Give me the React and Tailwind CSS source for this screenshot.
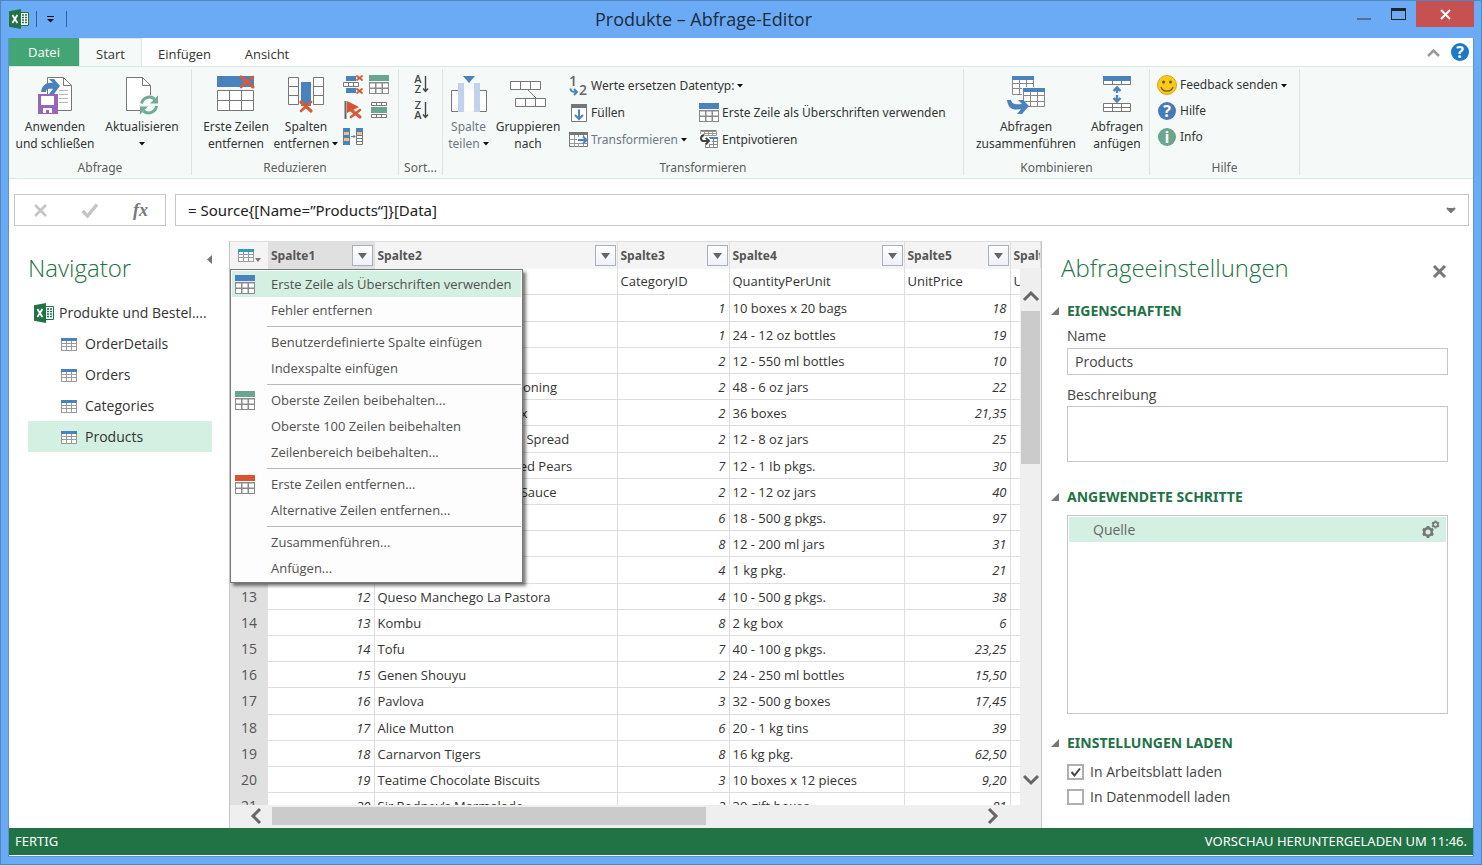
import { useState } from "react";

const products = [
  ["ProductID", "ProductName", "CategoryID", "QuantityPerUnit", "UnitPrice", "UnitsInStock"],
  ["1", "Chai", "1", "10 boxes x 20 bags", "18", "39"],
  ["2", "Chang", "1", "24 - 12 oz bottles", "19", "17"],
  ["3", "Aniseed Syrup", "2", "12 - 550 ml bottles", "10", "13"],
  ["4", "Chef Anton’s Cajun Seasoning", "2", "48 - 6 oz jars", "22", "53"],
  ["5", "Chef Anton’s Gumbo Mix", "2", "36 boxes", "21,35", "0"],
  ["6", "Grandma’s Boysenberry Spread", "2", "12 - 8 oz jars", "25", "12"],
  ["7", "Uncle Bob’s Organic Dried Pears", "7", "12 - 1 Ib pkgs.", "30", "15"],
  ["8", "Northwoods Cranberry Sauce", "2", "12 - 12 oz jars", "40", "6"],
  ["9", "Mishi Kobe Niku", "6", "18 - 500 g pkgs.", "97", "29"],
  ["10", "Ikura", "8", "12 - 200 ml jars", "31", "31"],
  ["11", "Queso Cabrales", "4", "1 kg pkg.", "21", "22"],
  ["12", "Queso Manchego La Pastora", "4", "10 - 500 g pkgs.", "38", "86"],
  ["13", "Kombu", "8", "2 kg box", "6", "24"],
  ["14", "Tofu", "7", "40 - 100 g pkgs.", "23,25", "35"],
  ["15", "Genen Shouyu", "2", "24 - 250 ml bottles", "15,50", "39"],
  ["16", "Pavlova", "3", "32 - 500 g boxes", "17,45", "29"],
  ["17", "Alice Mutton", "6", "20 - 1 kg tins", "39", "0"],
  ["18", "Carnarvon Tigers", "8", "16 kg pkg.", "62,50", "42"],
  ["19", "Teatime Chocolate Biscuits", "3", "10 boxes x 12 pieces", "9,20", "25"],
  ["20", "Sir Rodney’s Marmalade", "3", "30 gift boxes", "81", "40"],
];

const columns = ["Spalte1", "Spalte2", "Spalte3", "Spalte4", "Spalte5", "Spalte6"];
const numericColumns = [0, 2, 4, 5];

const queries = ["OrderDetails", "Orders", "Categories", "Products"];

const menuGroups = [
  [
    { label: "Erste Zeile als Überschriften verwenden", color: "#4a82bd" },
    { label: "Fehler entfernen" },
  ],
  [{ label: "Benutzerdefinierte Spalte einfügen" }, { label: "Indexspalte einfügen" }],
  [
    { label: "Oberste Zeilen beibehalten...", color: "#69a58f" },
    { label: "Oberste 100 Zeilen beibehalten" },
    { label: "Zeilenbereich beibehalten..." },
  ],
  [
    { label: "Erste Zeilen entfernen...", color: "#d9532f" },
    { label: "Alternative Zeilen entfernen..." },
  ],
  [{ label: "Zusammenführen..." }, { label: "Anfügen..." }],
];

// ---------- Icons ----------

const Svg = ({ w, h, children, className = "" }) => (
  <svg width={w} height={h} viewBox={`0 0 ${w} ${h}`} fill="none" className={`shrink-0 overflow-visible ${className}`} aria-hidden="true">
    {children}
  </svg>
);

// Red brush-like cross used by all "remove" icons
const Cross = ({ x, y, w, h }) => (
  <g stroke="#d65b3a" strokeLinecap="round">
    <path d={`M${x} ${y}L${x + w} ${y + h}`} strokeWidth={w > 8 ? 3.2 : 2} />
    <path d={`M${x + w} ${y}L${x} ${y + h}`} strokeWidth={w > 8 ? 2.6 : 1.8} />
  </g>
);

const ExcelIcon = () => (
  <Svg w={20} h={20}>
    <path d="M10 3.5h9.5v13H10z" fill="#fff" stroke="#217346" />
    <path d="M13 6h5M13 8.5h5M13 11h5M13 13.5h5" stroke="#217346" strokeWidth="1.6" strokeDasharray="2 1" />
    <path d="M0 2.2L12 0v20L0 17.8z" fill="#217346" />
    <path d="M3.4 6l5 8M8.4 6l-5 8" stroke="#fff" strokeWidth="1.8" />
  </Svg>
);

const GridIcon = ({ color }) => (
  <Svg w={20} h={19}>
    <path d="M0 0h20v6H0z" fill={color} />
    <path d="M0 7h20v12H0z" fill="#8a8a8a" />
    <path d="M1 8.5h5v4H1zM7.5 8.5h5v4h-5zM14 8.5h5v4h-5zM1 14h5v4H1zM7.5 14h5v4h-5zM14 14h5v4h-5z" fill="#fff" />
  </Svg>
);

const TableIcon = ({ color = "#4a82bd" }) => (
  <Svg w={16} h={13}>
    <path d="M0 0h16v13H0z" fill="#9a9a9a" />
    <path d="M0 0h16v3H0z" fill={color} />
    <path d="M1 3h4v2H1zM6 3h4v2H6zM11 3h4v2h-4zM1 6h4v2H1zM6 6h4v2H6zM11 6h4v2h-4zM1 9h4v3H1zM6 9h4v3H6zM11 9h4v3h-4z" fill="#fff" />
  </Svg>
);

const ApplyIcon = () => (
  <Svg w={36} h={38}>
    <path d="M10.5 1.5h16l8 8v25h-24z" fill="#fff" stroke="#777" />
    <path d="M26.5 1.5v8h8" stroke="#777" />
    <path d="M22 14.5h9M22 18.5h9M22 22.5h9M22 26.5h9" stroke="#b5b5b5" />
    <path d="M4 16C5 9 10 6 16 7l-4-4h5l6 7-6 8h-5l4-5c-5-1-7 0-7 3z" fill="#4a82bd" />
    <path d="M1 18h20v20H1z" fill="#9866b8" />
    <path d="M4 20h13v9H4zM6 32h9v5h-3v-3H9v3H6z" fill="#fff" />
  </Svg>
);

const RefreshIcon = () => (
  <Svg w={34} h={38}>
    <path d="M1.5 1.5h16l8 8v25h-24z" fill="#fff" stroke="#777" />
    <path d="M17.5 1.5v8h8" stroke="#777" />
    <circle cx="24" cy="29" r="10" fill="#f5faf8" />
    <path d="M16.5 27.5a8 8 0 0 1 13-4.5M31.5 30a8 8 0 0 1-13 5" stroke="#72aa97" strokeWidth="3" />
    <path d="M33 19.5v8h-8zM15 38.5v-8h8z" fill="#72aa97" />
  </Svg>
);

const RemoveRowsIcon = () => (
  <Svg w={38} h={38}>
    <path d="M0 0h37v11H0z" fill="#4a82bd" />
    <path d="M.5 14.5h36v20H.5z" fill="#fff" stroke="#777" />
    <path d="M.5 24.5h36M12.5 14.5v20M24.5 14.5v20" stroke="#777" />
    <Cross x={24} y={1} w={12} h={10} />
  </Svg>
);

const RemoveColumnsIcon = () => (
  <Svg w={37} h={38}>
    <path d="M.5 1.5h10v27H.5zM25.5 1.5h10v27h-10z" fill="#fff" stroke="#777" />
    <path d="M.5 10.5h10M.5 19.5h10M25.5 10.5h10M25.5 19.5h10" stroke="#777" />
    <path d="M13 6h10v24H13z" fill="#4a82bd" />
    <Cross x={13} y={26} w={10} h={9} />
  </Svg>
);

const DuplicateRowsIcon = () => (
  <Svg w={20} h={19}>
    <path d="M3 1h10v5H3zM3 13h10v5H3z" fill="#4a82bd" />
    <path d="M.5 7.5h15v4H.5z" fill="#fff" stroke="#777" />
    <path d="M5.5 7.5v4M10.5 7.5v4" stroke="#777" />
    <Cross x={14} y={1} w={5} h={4} />
    <Cross x={14} y={14} w={5} h={4} />
  </Svg>
);

const RemoveErrorsIcon = () => (
  <Svg w={20} h={19}>
    <path d="M2.5 0v18" stroke="#666" strokeWidth="2" />
    <path d="M4 0l12 6-4 2-8 4z" fill="#d9532f" />
    <Cross x={8} y={9} w={9} h={7} />
  </Svg>
);

const KeepRangeIcon = () => (
  <Svg w={20} h={17}>
    <path d="M2.5 .5h15v3h-15zM2.5 12.5h15v3h-15z" fill="#fff" stroke="#777" />
    <path d="M7.5 .5v3M12.5 .5v3M7.5 12.5v3M12.5 12.5v3" stroke="#777" />
    <path d="M2 5h16v6H2z" fill="#69a58f" />
  </Svg>
);

const ChooseColumnsIcon = () => (
  <Svg w={20} h={17}>
    <path d="M0 0h7v17H0zM13 0h7v8h-7z" fill="#4a82bd" />
    <path d="M1 4h5v3H1zM1 10h5v3H1zM14 4h5v3h-5z" fill="#eec27c" />
    <path d="M13.5 7.5h6v9h-6zM13.5 10.5h6M13.5 13.5h6" fill="#fff" stroke="#777" />
    <path d="M8 8.5h4M10.5 7l1.5 1.5-1.5 1.5" stroke="#4a82bd" />
  </Svg>
);

const SortIcon = ({ top, bottom }) => (
  <Svg w={16} h={20}>
    <g fill="#444" fontSize="11" fontWeight="600" fontFamily="Open Sans, sans-serif" textAnchor="middle">
      <text x="5" y="9">{top}</text>
      <text x="5" y="19">{bottom}</text>
    </g>
    <path d="M12.5 2v15M10 14.5l2.5 3 2.5-3" stroke="#444" strokeWidth="1.4" />
  </Svg>
);

const SplitColumnIcon = () => (
  <Svg w={36} h={38}>
    <path d="M.5 14.5h8v21h-8zM27.5 14.5h8v21h-8z" fill="#fff" stroke="#777" />
    <path d="M14 14h9v21h-9z" fill="#fff" />
    <path d="M7 7h6v29H7zM23 7h6v29h-6z" fill="#c0d3ea" />
    <path d="M12 0h12l-6 7z" fill="#4a82bd" />
  </Svg>
);

const GroupByIcon = () => (
  <Svg w={36} h={38}>
    <path d="M.5 5.5h30v8H.5zM5.5 22.5h30v8h-30z" fill="#fff" stroke="#777" />
    <path d="M10.5 5.5v8M20.5 5.5v8M15.5 22.5v8M25.5 22.5v8M18 14l8 8" stroke="#777" />
  </Svg>
);

const ReplaceIcon = () => (
  <Svg w={19} h={20}>
    <g fill="#666" fontWeight="600" fontFamily="Open Sans, sans-serif">
      <text x="0" y="10" fontSize="14">1</text>
      <text x="10" y="19" fontSize="14">2</text>
    </g>
    <path d="M1.5 12.5c0 3 2 3.5 6 3.5M5 13l3 3-3 3" stroke="#4a82bd" strokeWidth="2" />
  </Svg>
);

const FillIcon = () => (
  <Svg w={19} h={18}>
    <path d="M2.5 .5h15v17h-15z" fill="#fff" stroke="#777" />
    <path d="M2 0h16v4H2z" fill="#777" />
    <path d="M10 5.5v9M6 11l4 4 4-4" stroke="#4a82bd" strokeWidth="2" />
  </Svg>
);

const TransformIcon = () => (
  <Svg w={19} h={16}>
    <path d="M.5 .5h18v14H.5z" fill="#fff" stroke="#777" />
    <path d="M0 0h19v3H0z" fill="#777" />
    <path d="M.5 7.5h18M.5 11.5h18M5.5 3v12M9.5 3v12M14.5 3v12" stroke="#999" />
    <path d="M8 5h7v6H8z" fill="#fff" />
    <path d="M9 8h8M14 4.5L17.5 8 14 11.5" stroke="#4a82bd" strokeWidth="2" />
  </Svg>
);

const UnpivotIcon = () => (
  <Svg w={20} h={19}>
    <path d="M1.5 1.5h16v4h-16zM5.5 1.5v4M9.5 1.5v4M13.5 1.5v4M1 3.5h16" fill="#fff" stroke="#999" />
    <path d="M1.5 .5h16" stroke="#777" />
    <path d="M6.5 8.5h12v9h-12zM10.5 8.5v9M14.5 8.5v9M6 11.5h12M6 14.5h12" fill="#fff" stroke="#888" />
    <path d="M10 7h9v2h-9z" fill="#4a82bd" />
    <path d="M5 4C0 6 0 11 5 11h5M7.5 8l3 3-3 3" stroke="#fff" strokeWidth="4" />
    <path d="M5 5C1 6 1 11 5 11h4M7 8l3 3-3 3" stroke="#444" strokeWidth="2" />
  </Svg>
);

const MergeIcon = () => (
  <Svg w={38} h={38}>
    <path d="M5.5 .5h21v18h-21zM5.5 7.5h21M5.5 12.5h21M12.5 4v14M19.5 4v14" fill="#fff" stroke="#888" />
    <path d="M5 0h22v4H5z" fill="#4a82bd" />
    <path d="M15 11h24v21H15z" fill="#f5faf8" />
    <path d="M16.5 12.5h21v18h-21zM16.5 19.5h21M16.5 25.5h21M23.5 16v14M30.5 16v14" fill="#fff" stroke="#888" />
    <path d="M16 12h22v4H16z" fill="#4a82bd" />
    <path d="M0 24h4c1 4 4 5 11 4l-4-4h5l6 6-7 8h-5l4-5C5 35 1 32 0 24z" fill="#4a82bd" />
  </Svg>
);

const AppendIcon = () => (
  <Svg w={28} h={38}>
    <path d="M.5 .5h27v8H.5zM.5 27.5h27v8H.5zM.5 31.5h27M9.5 5v4M18.5 5v4M9.5 27.5v8M18.5 27.5v8" fill="#fff" stroke="#777" />
    <path d="M0 0h28v5H0z" fill="#4a82bd" />
    <path d="M14 11v6M10.5 15l3.5-3.5 3.5 3.5M14 19v6M10.5 22l3.5 3.5 3.5-3.5" stroke="#4a82bd" strokeWidth="2.4" />
  </Svg>
);

const SmileyIcon = () => (
  <Svg w={20} h={20}>
    <circle cx="10" cy="10" r="9.5" fill="#fbc917" stroke="#d9a514" />
    <circle cx="6.5" cy="7" r="1.5" fill="#6b5310" />
    <circle cx="13.5" cy="7" r="1.5" fill="#6b5310" />
    <path d="M4 12c2 5.5 10 5.5 12 0" stroke="#6b5310" strokeWidth="1.2" />
  </Svg>
);

const RoundIcon = ({ color, children }) => (
  <Svg w={20} h={20}>
    <circle cx="10" cy="10" r="9" fill={color} />
    <text x="10" y="15.5" fill="#fff" fontSize="16" fontWeight="700" fontFamily="Open Sans, sans-serif" textAnchor="middle">
      {children}
    </text>
  </Svg>
);

const Gears = () => (
  <Svg w={20} h={20}>
    <g stroke="#777">
      <circle cx="7" cy="12" r="3.8" strokeWidth="2.6" />
      <path d="M7 6v2M7 16v2M1.8 9l1.800 1M10.400 14l1.800 1M1.800 15l1.800-1M10.400 10l1.800-1" strokeWidth="2.8" />
      <circle cx="14.5" cy="4.5" r="2.4" strokeWidth="1.8" />
      <path d="M14.5 .5v1M14.500 7.500v1M11 2.500l1 .6M17 6l1 .6M11 6.500l1-.6M17 3l1-.6" strokeWidth="1.8" />
    </g>
  </Svg>
);

const Caret = () => (
  <Svg w={6} h={3}>
    <path d="M0 0h6L3 3.5z" fill="#111" />
  </Svg>
);

const Chevron = ({ d }) => (
  <Svg w={16} h={16}>
    <path d={d} stroke="#666" strokeWidth="3" />
  </Svg>
);

// ---------- Ribbon ----------

const RibbonGroup = ({ label, className, children }) => (
  <div className={`flex shrink-0 flex-col justify-between border-r border-[#dbe5e1] ${className}`}>
    <div className="flex pt-[7px]">{children}</div>
    <div className="text-center text-xs leading-[14px] text-[#5c5c5c]">{label}</div>
  </div>
);

const BigButton = ({ icon, lines, caret, className, muted }) => (
  <button type="button" className={`flex shrink-0 flex-col items-center text-xs leading-[17px] whitespace-nowrap ${muted ? "text-[#707684]" : "text-[#333]"} ${className}`}>
    <span className="flex h-[42px] items-start justify-center">{icon}</span>
    <span>{lines[0]}</span>
    <span className="flex h-[17px] items-center gap-[3px]">
      {lines[1]}
      {caret && <Caret />}
    </span>
  </button>
);

const SmallButton = ({ icon, label, caret, muted, className = "" }) => (
  <button type="button" className={`flex items-center gap-[3px] text-xs whitespace-nowrap ${muted ? "text-[#707684]" : "text-[#333]"} ${className}`}>
    {icon}
    <span>{label}</span>
    {caret && <Caret />}
  </button>
);

const IconButton = ({ label, children }) => (
  <button type="button" aria-label={label} className="flex h-[26px] w-5 items-center justify-center">
    {children}
  </button>
);

const Ribbon = () => (
  <div className="flex shrink-0 border-y border-[#d5eae1] bg-[#f5faf8] pt-[2px] pb-[3px] font-['Noto_Sans',sans-serif]">
    <div className="flex h-[106px]">
      <RibbonGroup label="Abfrage" className="w-[183px]">
        <BigButton className="w-[92px]" icon={<ApplyIcon />} lines={["Anwenden", "und schließen"]} />
        <BigButton className="w-[82px]" icon={<RefreshIcon />} lines={["Aktualisieren", ""]} caret />
      </RibbonGroup>
      <RibbonGroup label="Reduzieren" className="w-[207px]">
        <BigButton className="w-[88px]" icon={<RemoveRowsIcon />} lines={["Erste Zeilen", "entfernen"]} />
        <BigButton className="w-[52px]" icon={<RemoveColumnsIcon />} lines={["Spalten", "entfernen"]} caret />
        <div className="-mt-[5px] ml-[11px] flex gap-[6px]">
          <div>
            <IconButton label="Duplikate entfernen"><DuplicateRowsIcon /></IconButton>
            <IconButton label="Fehler entfernen"><RemoveErrorsIcon /></IconButton>
            <IconButton label="Spalten auswählen"><ChooseColumnsIcon /></IconButton>
          </div>
          <div>
            <IconButton label="Oberste Zeilen beibehalten"><GridIcon color="#69a58f" /></IconButton>
            <IconButton label="Zeilenbereich beibehalten"><KeepRangeIcon /></IconButton>
          </div>
        </div>
      </RibbonGroup>
      <RibbonGroup label="Sort..." className="w-11">
        <div className="-mt-[5px] ml-3">
          <IconButton label="Aufsteigend sortieren"><SortIcon top="A" bottom="Z" /></IconButton>
          <IconButton label="Absteigend sortieren"><SortIcon top="Z" bottom="A" /></IconButton>
        </div>
      </RibbonGroup>
      <RibbonGroup label="Transformieren" className="w-[521px]">
        <BigButton className="w-[51px]" icon={<SplitColumnIcon />} lines={["Spalte", "teilen"]} caret muted />
        <BigButton className="w-[68px]" icon={<GroupByIcon />} lines={["Gruppieren", "nach"]} />
        <div className="-mt-1 ml-[7px] grid auto-rows-[27px] grid-cols-[130px_auto]">
          <SmallButton className="col-span-2" icon={<ReplaceIcon />} label="Werte ersetzen Datentyp:" caret />
          <SmallButton icon={<FillIcon />} label="Füllen" />
          <SmallButton icon={<GridIcon color="#4a82bd" />} label="Erste Zeile als Überschriften verwenden" />
          <SmallButton icon={<TransformIcon />} label="Transformieren" caret muted />
          <SmallButton icon={<UnpivotIcon />} label="Entpivotieren" />
        </div>
      </RibbonGroup>
      <RibbonGroup label="Kombinieren" className="w-[186px]">
        <BigButton className="w-[124px]" icon={<MergeIcon />} lines={["Abfragen", "zusammenführen"]} />
        <BigButton className="w-[58px]" icon={<AppendIcon />} lines={["Abfragen", "anfügen"]} />
      </RibbonGroup>
      <RibbonGroup label="Hilfe" className="w-[150px]">
        <div className="-mt-1 ml-[7px] grid auto-rows-[26px]">
          <SmallButton icon={<SmileyIcon />} label="Feedback senden" caret />
          <SmallButton icon={<RoundIcon color="#4a7ab5">?</RoundIcon>} label="Hilfe" />
          <SmallButton icon={<RoundIcon color="#69a58f">i</RoundIcon>} label="Info" />
        </div>
      </RibbonGroup>
    </div>
  </div>
);

const TitleBar = () => (
  <header className="flex h-[37px] shrink-0 items-start">
    <div className="flex h-9 items-center pl-2">
      <ExcelIcon />
      <span className="ml-[7px] h-4 w-px bg-[#2f5f9c]" />
      <button type="button" aria-label="Symbolleiste anpassen" className="ml-[10px]">
        <Svg w={7} h={7}>
          <path d="M0 .5h7" stroke="#111" />
          <path d="M0 3h7L3.5 6.5z" fill="#111" />
        </Svg>
      </button>
      <span className="ml-3 h-4 w-px bg-[#2f5f9c]" />
    </div>
    <h1 className="flex-1 pt-[2px] pr-2 text-center text-lg leading-8 text-[#1c2b3d]">Produkte – Abfrage-Editor</h1>
    <div className="flex justify-end pr-[7px]">
      <button type="button" aria-label="Minimieren" className="flex h-[26px] w-8 justify-center pt-[17px]">
        <span className="h-[2px] w-[14px] bg-[#4f6f9b]" />
      </button>
      <button type="button" aria-label="Maximieren" className="flex h-[26px] w-9 justify-center pt-[7px]">
        <span className="h-3 w-[15px] border border-t-[3px] border-[#222]" />
      </button>
      <button type="button" aria-label="Schließen" className="flex h-[26px] w-[58px] items-center justify-center bg-[#c75050]">
        <Svg w={11} h={9}>
          <path d="M1 0l9 9M10 0L1 9" stroke="#fff" strokeWidth="2" />
        </Svg>
      </button>
    </div>
  </header>
);

const TabBar = () => (
  <nav className="flex h-7 shrink-0 items-stretch text-[13px] text-[#333]">
    <button type="button" className="w-[70px] bg-[#43a574] pt-px text-white">Datei</button>
    <button type="button" className="-mb-px w-[63px] border border-b-0 border-[#d5eae1] bg-[#f5faf8] pt-1">Start</button>
    <button type="button" className="w-[85px] pt-[5px]">Einfügen</button>
    <button type="button" className="w-20 pt-[5px]">Ansicht</button>
    <div className="ml-auto flex items-center gap-[10px] pr-[3px]">
      <button type="button" aria-label="Menüband minimieren">
        <Svg w={13} h={9}>
          <path d="M1 8l5.5-5.5L12 8" stroke="#999" strokeWidth="2.5" />
        </Svg>
      </button>
      <button type="button" aria-label="Hilfe">
        <RoundIcon color="#1979ca">?</RoundIcon>
      </button>
    </div>
  </nav>
);

const FormulaBar = () => (
  <div className="flex shrink-0 gap-[9px] py-[15px] pr-1 pl-[5px]">
    <div className="flex h-8 w-[152px] items-center justify-between border border-[#c6c6c6] pr-[17px] pl-[19px]">
      <button type="button" aria-label="Abbrechen">
        <Svg w={13} h={13}>
          <path d="M1 1l11 11M12 1L1 12" stroke="#c4c4c4" strokeWidth="2.5" />
        </Svg>
      </button>
      <button type="button" aria-label="Übernehmen">
        <Svg w={18} h={15}>
          <path d="M1.5 8l5 5L16 1.5" stroke="#c4c4c4" strokeWidth="3.5" />
        </Svg>
      </button>
      <button type="button" aria-label="Funktion einfügen" className="font-['Liberation_Serif',serif] text-lg leading-5 font-bold text-[#777] italic">
        fx
      </button>
    </div>
    <div className="flex h-8 flex-1 items-center border border-[#c6c6c6] px-3">
      <input aria-label="Formel" defaultValue="= Source{[Name=”Products“]}[Data]" className="flex-1 font-['Noto_Sans',sans-serif] text-[15px] text-[#222] outline-none" />
      <button type="button" aria-label="Formelleiste erweitern">
        <Svg w={10} h={7}>
          <path d="M1 1l4 4 4-4" fill="#777" stroke="#777" strokeWidth="2" />
        </Svg>
      </button>
    </div>
  </div>
);

const Navigator = ({ selected, onSelect }) => (
  <aside className="w-[220px] shrink-0 pr-[17px] text-sm text-[#333]">
    <div className="flex justify-between pt-2 pl-[19px]">
      <h2 className="pt-[3px] text-2xl leading-8 font-light text-[#217346]">Navigator</h2>
      <button type="button" aria-label="Navigator einklappen" className="h-5">
        <Svg w={5} h={9}>
          <path d="M5 0v9L0 4.5z" fill="#777" />
        </Svg>
      </button>
    </div>
    <div className="mt-[13px] flex h-[31px] items-center gap-[5px] pl-[25px]">
      <ExcelIcon />
      <span className="whitespace-nowrap">Produkte und Bestel....</span>
    </div>
    <ul className="ml-[19px]">
      {queries.map((name) => (
        <li key={name}>
          <button
            type="button"
            onClick={() => onSelect(name)}
            className={`flex h-[31px] w-full items-center gap-2 pt-px pl-[33px] ${selected === name ? "bg-[#d4f0e2]" : ""}`}
          >
            <TableIcon />
            {name}
          </button>
        </li>
      ))}
    </ul>
  </aside>
);

const ContextMenu = () => (
  <div role="menu" className="absolute top-7 left-0 z-10 w-[293px] border border-[#777] bg-[#fdfdfd] p-px text-[13px] text-[#505050] shadow-[3px_3px_3px_rgba(0,0,0,0.5)]">
    {menuGroups.map((group, g) => (
      <div key={g}>
        {g > 0 && <div className="mt-[3px] mb-[2px] ml-[35px] h-px bg-[#b8b8b8]" />}
        {group.map((item, i) => (
          <button
            key={item.label}
            type="button"
            role="menuitem"
            className={`grid h-[26px] w-full grid-cols-[39px_auto] items-center text-left whitespace-nowrap ${g === 0 && i === 0 ? "bg-[#d4f0e2]" : ""}`}
          >
            <span className="pl-[3px]">{item.color && <GridIcon color={item.color} />}</span>
            <span className="pt-[2px]">{item.label}</span>
          </button>
        ))}
      </div>
    ))}
  </div>
);

const DataGrid = () => (
  <section className="relative flex min-w-0 flex-1 flex-col border-x border-[#c6c6c6]">
    <div className="relative min-h-0 flex-1 overflow-hidden">
      <table className="w-full table-fixed border-collapse text-[13px] text-[#333]">
        <colgroup>
          <col className="w-[38px]" />
          <col className="w-[106px]" />
          <col className="w-[243px]" />
          <col className="w-[112px]" />
          <col className="w-[175px]" />
          <col className="w-[106px]" />
          <col />
        </colgroup>
        <thead>
          <tr className="h-[27px] border-t border-[#dedede] bg-[#f4f4f4] text-left text-xs text-[#555]">
            <th className="p-0">
              <button type="button" aria-label="Tabellenmenü" className="flex items-end gap-px pl-2">
                <TableIcon color="#2f9bc1" />
                <Svg w={6} h={4}>
                  <path d="M0 0h6L3 4z" fill="#777" />
                </Svg>
              </button>
            </th>
            {columns.map((name, i) => (
              <th key={name} className={`overflow-hidden border-r border-[#dedede] p-0 pl-[3px] font-bold ${i === 0 ? "bg-[#e0e0e0]" : ""}`}>
                <div className="flex h-[26px] items-center justify-between pt-px pr-px">
                  {name}
                  {i < 5 && (
                    <button type="button" aria-label={`${name} filtern`} className="flex h-[21px] w-[21px] items-center justify-center border border-[#a8b0bd] bg-linear-to-b from-white to-[#eef1f7]">
                      <Svg w={9} h={6}>
                        <path d="M0 0h9L4.5 6z" fill="#666" />
                      </Svg>
                    </button>
                  )}
                </div>
              </th>
            ))}
          </tr>
        </thead>
        <tbody>
          {products.map((row, r) => (
            <tr key={row[0]} className="h-[26px] nth-[5n+2]:h-[27px]">
              <th scope="row" className="bg-[#e0e0e0] p-0 text-center text-sm leading-5 font-normal text-[#555]">{r + 1}</th>
              {row.map((value, c) => (
                <td
                  key={c}
                  className={`overflow-hidden border-r border-b border-[#dedede] px-[3px] py-0 leading-5 whitespace-nowrap ${r > 0 && numericColumns.includes(c) ? "text-right italic" : ""}`}
                >
                  {value}
                </td>
              ))}
            </tr>
          ))}
        </tbody>
      </table>
      <div className="absolute top-[27px] right-0 bottom-0 flex w-[21px] flex-col items-center bg-[#efefef] pt-[19px] pb-[17px]">
        <Chevron d="M1 13l7-7 7 7" />
        <div className="mt-[8px] h-[153px] w-[19px] bg-[#cbcbcb]" />
        <div className="mt-auto">
          <Chevron d="M1 4l7 7 7-7" />
        </div>
      </div>
    </div>
    <div className="flex h-[23px] shrink-0 items-center bg-[#efefef] pr-10 pb-px pl-[18px]">
      <Chevron d="M12 1L5 8l7 7" />
      <div className="ml-2 h-[18px] w-[434px] bg-[#cbcbcb]" />
      <div className="ml-auto">
        <Chevron d="M4 1l7 7-7 7" />
      </div>
    </div>
    <ContextMenu />
  </section>
);

const SectionTitle = ({ children }) => (
  <h3 className="flex items-center gap-2 font-['Noto_Sans',sans-serif] text-sm leading-5 font-bold text-[#217346]">
    <Svg w={8} h={8}>
      <path d="M8 0v8H0z" fill="#777" />
    </Svg>
    {children}
  </h3>
);

const CheckOption = ({ label, checked, onChange }) => (
  <label className="flex h-[25px] items-center gap-[6px] text-sm text-[#444]">
    <span className="relative flex">
      <input type="checkbox" checked={checked} onChange={onChange} className="h-4 w-[17px] appearance-none border-2 border-[#b0b0b0] bg-white" />
      {checked && (
        <Svg w={17} h={16} className="pointer-events-none absolute inset-0">
          <path d="M4.5 8l3 3.5 5.5-7" stroke="#444" strokeWidth="2" />
        </Svg>
      )}
    </span>
    {label}
  </label>
);

const Settings = () => {
  const [loadTo, setLoadTo] = useState({ sheet: true, model: false });

  const toggle = (key) => setLoadTo((prev) => ({ ...prev, [key]: !prev[key] }));

  return (
    <aside className="w-[431px] shrink-0 pr-[25px] pl-[9px] text-sm text-[#444]">
      <div className="flex items-center justify-between pt-[11px] pr-[2px] pl-[10px]">
        <h2 className="text-2xl leading-8 font-light text-[#217346]">Abfrageeinstellungen</h2>
        <button type="button" aria-label="Bereich schließen" className="pt-[6px]">
          <Svg w={13} h={13}>
            <path d="M1 1l11 11M12 1L1 12" stroke="#777" strokeWidth="3" />
          </Svg>
        </button>
      </div>
      <div className="mt-[17px]">
        <SectionTitle>EIGENSCHAFTEN</SectionTitle>
        <div className="flex flex-col pl-4">
          <label htmlFor="query-name" className="mt-[5px] h-[22px] leading-5">Name</label>
          <input id="query-name" defaultValue="Products" className="h-[27px] border border-[#c6c6c6] px-[7px] outline-none" />
          <label htmlFor="query-description" className="mt-[10px] h-[21px] leading-5">Beschreibung</label>
          <textarea id="query-description" className="h-14 resize-none border border-[#c6c6c6] outline-none" />
        </div>
      </div>
      <div className="mt-[25px]">
        <SectionTitle>ANGEWENDETE SCHRITTE</SectionTitle>
        <ul className="mt-2 ml-4 h-[199px] border border-[#c6c6c6] p-px">
          <li className="flex h-[25px] items-center justify-between bg-[#d4f0e2] pr-[5px] pl-6 text-[#666]">
            Quelle
            <button type="button" aria-label="Einstellungen für Quelle">
              <Gears />
            </button>
          </li>
        </ul>
      </div>
      <div className="mt-[19px]">
        <SectionTitle>EINSTELLUNGEN LADEN</SectionTitle>
        <div className="mt-[6px] pl-4">
          <CheckOption label="In Arbeitsblatt laden" checked={loadTo.sheet} onChange={() => toggle("sheet")} />
          <CheckOption label="In Datenmodell laden" checked={loadTo.model} onChange={() => toggle("model")} />
        </div>
      </div>
    </aside>
  );
};

const App = () => {
  const [selected, setSelected] = useState("Products");

  return (
    <div className="flex h-screen flex-col border border-[#5185bd] bg-[#6babf5] font-['Open_Sans',sans-serif]">
      <TitleBar />
      <div className="mx-[7px] mb-[7px] flex min-h-0 flex-1 flex-col border border-t-0 border-[#5a93d4] bg-white">
        <TabBar />
        <Ribbon />
        <FormulaBar />
        <main className="flex min-h-0 flex-1">
          <Navigator selected={selected} onSelect={setSelected} />
          <DataGrid />
          <Settings />
        </main>
        <footer className="mb-px flex h-[27px] shrink-0 items-center justify-between bg-[#217346] px-[6px] pt-px font-['Noto_Sans',sans-serif] text-[13px] text-white">
          <span>FERTIG</span>
          <span>VORSCHAU HERUNTERGELADEN UM 11:46.</span>
        </footer>
      </div>
    </div>
  );
};

export default App;
